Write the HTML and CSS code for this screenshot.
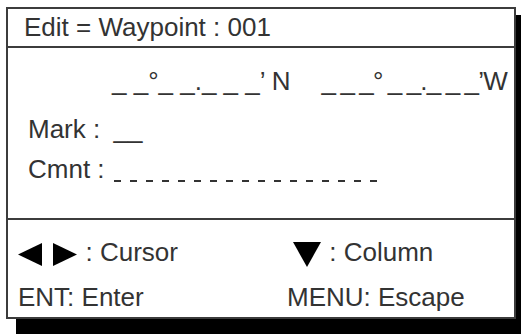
FILE: index.html
```html
<!DOCTYPE html>
<html lang="en">
<head>
  <meta charset="UTF-8" />
  <title>Edit Waypoint</title>
  <link rel="stylesheet" href="styles.css">
</head>
<body>

  <div class="panel">
    <div class="title">Edit = Waypoint : 001</div>

    <div class="fields">
      <div class="coords">
        <span class="lat">_ _°_ _._ _ _’ N</span>
        <span class="lon">_ _ _° _ _._ _ _’W</span>
      </div>
      <div class="row mark">Mark : <span class="blank">__</span></div>
      <div class="row cmnt">Cmnt : <span class="dashes"></span></div>
    </div>

    <div class="keys">
      <div class="key">
        <svg class="tri" width="24" height="23" viewBox="0 0 24 23"><polygon points="24,0 24,23 0,11.5" /></svg>
        <svg class="tri tri-r" width="24" height="23" viewBox="0 0 24 23"><polygon points="0,0 0,23 24,11.5" /></svg>
        <span class="lbl">: Cursor</span>
      </div>
      <div class="key col2">
        <svg class="tri down" width="28" height="25" viewBox="0 0 28 25"><polygon points="0,0 28,0 14,25" /></svg>
        <span class="lbl">: Column</span>
      </div>
      <div class="key">ENT: Enter</div>
      <div class="key">MENU: Escape</div>
    </div>
  </div>

</body>
</html>
```

FILE: styles.css
```css
html, body {
  min-height: 334px;
}

body {
  margin: 0;
  background: #fff;
  font-family: "Liberation Sans", Arial, sans-serif;
  color: #333;
  overflow: hidden;
}

.panel {
  margin: 7px 0 0 6px;
  width: 510px;
  height: 312px;
  box-sizing: border-box;
  border: 2px solid #3c3c3c;
  background: #fff;
  display: flex;
  flex-direction: column;
  box-shadow: 10px 8px 0 #000, 10px 20px 0 #000;
}

.title {
  height: 37px;
  line-height: 37px;
  padding-left: 16px;
  font-size: 26px;
  border-bottom: 2px solid #3c3c3c;
}

.fields {
  height: 172px;
  border-bottom: 2px solid #3c3c3c;
  padding-top: 18px;
  box-sizing: border-box;
  font-size: 26px;
}

.coords {
  display: flex;
  line-height: 30px;
  white-space: pre;
  padding-left: 104px;
}

.lon {
  margin-left: 31px;
  letter-spacing: -0.8px;
  word-spacing: -1.2px;
}

.row {
  line-height: 30px;
  padding-left: 20px;
}

.mark {
  margin-top: 18px;
}

.cmnt {
  margin-top: 10px;
}

.blank {
  margin-left: 6px;
}

.dashes {
  display: inline-block;
  width: 263px;
  height: 2px;
  margin-left: 2px;
  vertical-align: -4px;
  background: repeating-linear-gradient(to right, #333 0 7px, transparent 7px 16px);
}

.keys {
  flex: 1;
  display: grid;
  grid-template-columns: 269px 1fr;
  row-gap: 15px;
  padding: 17px 0 0 10px;
  align-content: start;
  font-size: 26px;
  line-height: 30px;
}

.tri {
  vertical-align: -5px;
}

.tri polygon {
  fill: #000;
}

.tri-r {
  margin-left: 4px;
}

.lbl {
  margin-left: 1px;
}

.down {
  margin-left: 6px;
  vertical-align: -6px;
}
```
